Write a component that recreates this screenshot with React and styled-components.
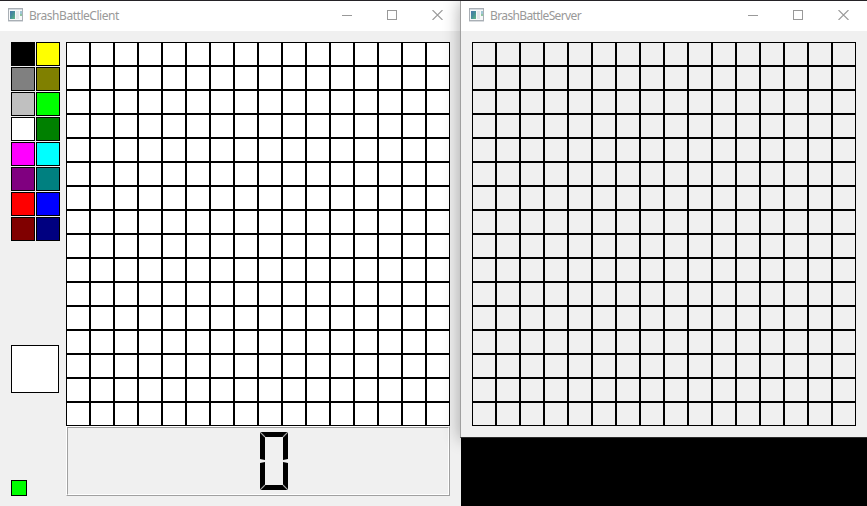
import React from "react";
import styled, { createGlobalStyle } from "styled-components";

const Global = createGlobalStyle`
  *, *::before, *::after { box-sizing: border-box; }
  body { margin: 0; background: #000; overflow: hidden; }
`;

const Desktop = styled.div`
  display: flex;
  align-items: flex-start;
  width: 867px;
  height: 506px;
  border-top: 1px solid #242226;
  background: #000;
  font-family: "Noto Sans", "Open Sans", sans-serif;
  overflow: hidden;
`;

const ClientWindow = styled.section`
  flex: none;
  width: 460px;
  height: 505px;
  background: #f0f0f0;
  box-shadow: 1px 0 #f0f0f0;
`;

const ServerWindow = styled.section`
  flex: none;
  z-index: 1;
  width: 407px;
  height: 437px;
  background: #f0f0f0;
  border-left: 1px solid #a0a0a0;
  border-bottom: 1px solid #2d2d2d;
  box-shadow: -1px 1px 15px rgba(0, 0, 0, 0.3);
`;

const Bar = styled.header`
  display: flex;
  align-items: center;
  height: 30px;
  padding: 0 0 2px 8px;
  background: #fff;
`;

const Title = styled.span`
  flex: 1;
  margin: 2px 0 0 6px;
  color: #999;
  font-size: 12px;
  line-height: 16px;
  letter-spacing: ${(p) => p.$spacing}px;
  white-space: nowrap;
`;

const Controls = styled.div`
  display: flex;
  gap: 35px;
  margin-right: ${(p) => p.$right}px;
`;

const Glyph = styled.svg`
  display: block;
  flex: none;
`;

const ClientBody = styled.div`
  display: flex;
  gap: 6px;
  padding: 11px 0 0 11px;
`;

const ServerBody = styled.div`
  padding: 11px;
`;

const Sidebar = styled.aside`
  display: flex;
  flex-direction: column;
  width: 49px;
`;

const Palette = styled.div`
  display: grid;
  grid-template-columns: 24px 24px;
  grid-auto-rows: 24px;
  gap: 1px;
`;

const Swatch = styled.div`
  width: ${(p) => p.$size}px;
  height: ${(p) => p.$size}px;
  margin-top: ${(p) => p.$top || 0}px;
  border: 1px solid #000;
  background: ${(p) => p.$color};
`;

const Board = styled.div`
  display: grid;
  grid-template-columns: repeat(16, 24px);
  grid-auto-rows: 24px;
  width: 384px;
`;

const Cell = styled.div`
  border: 1px solid #000;
  background: ${(p) => p.$color};
`;

const LcdFrame = styled.div`
  width: 384px;
  height: 70px;
  border: 1px solid;
  border-color: #fff #a0a0a0 #a0a0a0 #fff;
`;

const LcdPanel = styled.div`
  display: flex;
  justify-content: center;
  height: 68px;
  padding: 4px 0 0 32px;
  border: 1px solid;
  border-color: #a0a0a0 #fff #fff #a0a0a0;
`;

const colors = [
  "#000000", "#ffff00", "#808080", "#808000",
  "#c0c0c0", "#00ff00", "#ffffff", "#008000",
  "#ff00ff", "#00ffff", "#800080", "#008080",
  "#ff0000", "#0000ff", "#800000", "#000080",
];

function AppIcon({ id }) {
  return (
    <Glyph width="15" height="14" viewBox="0 0 15 14" shapeRendering="crispEdges">
      <defs>
        <linearGradient id={id} x1="0" y1="0" x2="1" y2="1">
          <stop offset="0" stopColor="#4775ad" />
          <stop offset="0.5" stopColor="#479098" />
          <stop offset="1" stopColor="#65b982" />
        </linearGradient>
      </defs>
      <rect x="0.5" y="0.5" width="14" height="12" fill="#f7f8f9" stroke="#a9afb5" />
      <path d="M1 1.5h13" stroke="#d3d9df" />
      <rect x="2" y="3" width="5" height="8" fill={`url(#${id})`} />
      <rect x="8" y="3" width="3" height="8" fill="#e4e7ea" />
      <rect x="12" y="3" width="2" height="5" fill="#9fc6d4" />
      <rect x="12" y="6" width="2" height="2" fill="#8fc6a4" />
      <path d="M0 13.5h15" stroke="#d9dcdf" />
    </Glyph>
  );
}

function TitleBar({ title, iconId, right, spacing }) {
  return (
    <Bar>
      <AppIcon id={iconId} />
      <Title $spacing={spacing}>{title}</Title>
      <Controls $right={right}>
        <Glyph width="10" height="10" viewBox="0 0 10 10">
          <path d="M0 5.5h10" stroke="#999" />
        </Glyph>
        <Glyph width="10" height="10" viewBox="0 0 10 10">
          <rect x="0.5" y="0.5" width="9" height="9" fill="none" stroke="#999" />
        </Glyph>
        <Glyph width="11" height="10" viewBox="0 0 11 10">
          <path d="M0.5 0l10 10M10.5 0l-10 10" stroke="#999" strokeWidth="1.1" />
        </Glyph>
      </Controls>
    </Bar>
  );
}

function PixelBoard({ color }) {
  return (
    <Board>
      {Array.from({ length: 256 }, (_, i) => (
        <Cell key={i} $color={color} />
      ))}
    </Board>
  );
}

function LcdZero() {
  return (
    <Glyph width="28" height="58" viewBox="0 0 28 58" role="img" aria-label="0">
      <path
        d="M0 0H28V27L23 28V5H5V28L0 27ZM0 31L5 30V53H23V30L28 31V58H0Z"
        fill="#000"
      />
      <path d="M0 0L5 5M28 0L23 5M0 58L5 53M28 58L23 53" stroke="#a8a8a8" strokeWidth="1.1" />
    </Glyph>
  );
}

export default function App() {
  return (
    <>
      <Global />
      <Desktop>
        <ClientWindow>
          <TitleBar title="BrashBattleClient" iconId="client-icon" right={17} spacing={-0.47} />
          <ClientBody>
            <Sidebar>
              <Palette>
                {colors.map((c) => (
                  <Swatch key={c} $size={24} $color={c} />
                ))}
              </Palette>
              <Swatch $size={48} $top={104} $color="#fff" />
              <Swatch $size={16} $top={87} $color="#00ff00" />
            </Sidebar>
            <div>
              <PixelBoard color="#fff" />
              <LcdFrame>
                <LcdPanel>
                  <LcdZero />
                </LcdPanel>
              </LcdFrame>
            </div>
          </ClientBody>
        </ClientWindow>
        <ServerWindow>
          <TitleBar title="BrashBattleServer" iconId="server-icon" right={18} spacing={-0.62} />
          <ServerBody>
            <PixelBoard color="#f0f0f0" />
          </ServerBody>
        </ServerWindow>
      </Desktop>
    </>
  );
}
